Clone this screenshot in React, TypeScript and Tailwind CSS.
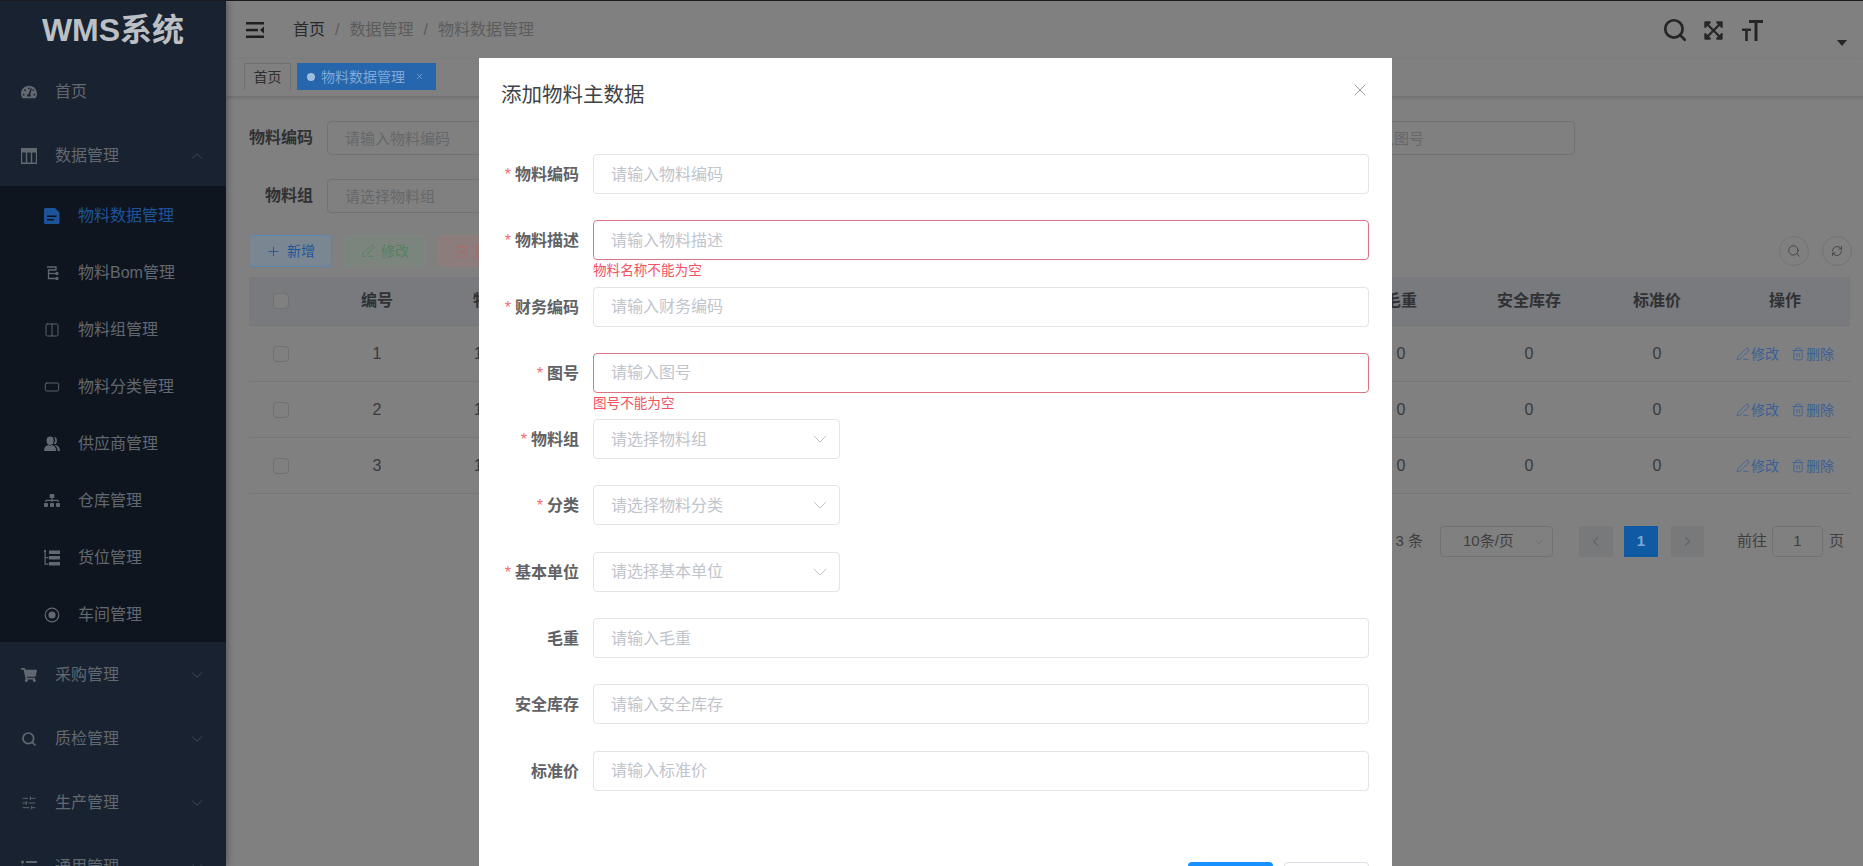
import { ChevronDown, ChevronLeft, ChevronRight, ChevronUp, Columns2, PenLine, Plus, RectangleHorizontal, RefreshCw, Search, SlidersHorizontal, Trash2, X } from "lucide-react";
import { FaExpandArrowsAlt, FaListUl, FaShoppingCart, FaSitemap, FaTachometerAlt } from "react-icons/fa";

function TableIcon() {
  return (
    <svg width="16" height="16" viewBox="0 0 16 16" fill="currentColor">
      <path d="M0 0h16v16H0zM1.200 4.500v10h3.600v-10zm5 0v10h3.600v-10zm5 0v10h3.600v-10z" fillRule="evenodd" />
    </svg>
  );
}

function DocIcon() {
  return (
    <svg width="16" height="16" viewBox="0 0 16 16" fill="currentColor">
      <path d="M1.500 0H11l4.500 4.500V14.500A1.500 1.500 0 0 1 14 16H1.500A1.500 1.500 0 0 1 0 14.500V1.500A1.500 1.500 0 0 1 1.500 0zM3 7.500v1.500h9.500V7.500zM3 11v1.500h7V11z" fillRule="evenodd" />
    </svg>
  );
}

function BomIcon() {
  return (
    <svg width="16" height="16" viewBox="0 0 16 16" fill="none" stroke="currentColor" strokeWidth="1.3">
      <path d="M3 2h9v3H4.500v8.500H12" />
      <path d="M4.500 8.500H12" />
      <circle cx="13" cy="8.500" r="1" />
      <circle cx="13" cy="13.500" r="1" />
    </svg>
  );
}

function PeopleIcon() {
  return (
    <svg width="17" height="16" viewBox="0 0 17 16" fill="currentColor">
      <ellipse cx="6.500" cy="4.500" rx="3.800" ry="4.500" />
      <path d="M0 15.500c0-4 2-6 4.500-6.500 1.200.8 2.800.8 4 0 2.500.5 4.500 2.500 4.500 6.500z" />
      <path d="M10.500.500c2 0 3.300 1.800 3.300 4 0 1.800-.8 3.300-2 3.800l-1.500-.8c1-1 1.600-2.200 1.600-3.400 0-1.300-.5-2.500-1.400-3.600zM12.500 9c2.500.5 4.500 2.500 4.500 6.500h-2.500c0-2.800-1-5-3-6z" />
    </svg>
  );
}

function RackIcon() {
  return (
    <svg width="16" height="16" viewBox="0 0 16 16" fill="currentColor">
      <rect x="0" y="0" width="2" height="2" />
      <rect x="0.500" y="2" width="1.200" height="13" />
      <rect x="1.500" y="7" width="3" height="1.200" />
      <rect x="1.500" y="13.500" width="3" height="1.200" />
      <rect x="5" y="0.500" width="11" height="3.500" />
      <rect x="5" y="6" width="11" height="3.500" />
      <rect x="5" y="12" width="11" height="3.500" />
    </svg>
  );
}

function RadioIcon() {
  return (
    <svg width="16" height="16" viewBox="0 0 16 16" fill="none" stroke="currentColor" strokeWidth="1.2">
      <circle cx="8" cy="8" r="6.800" />
      <circle cx="8" cy="8" r="3.600" fill="currentColor" stroke="none" />
    </svg>
  );
}

function ToggleIcon() {
  return (
    <svg width="18" height="16" viewBox="0 0 18 16" fill="#1f1f1f" className="shrink-0">
      <rect width="18" height="2.500" />
      <rect y="6.800" width="12" height="2.500" />
      <rect y="13.500" width="18" height="2.500" />
      <path d="M18 4.500v7L14 8z" />
    </svg>
  );
}

function TextSizeIcon() {
  return (
    <svg width="21" height="21" viewBox="0 0 21 21" fill="#262626">
      <path d="M7 0h14v3h-5.500v18h-3V3H7z" />
      <path d="M0 8.500h9v2.500H5.800v10H3.200V11H0z" />
    </svg>
  );
}

const subMenus = [
  { label: "物料数据管理", icon: <DocIcon />, active: true },
  { label: "物料Bom管理", icon: <BomIcon /> },
  { label: "物料组管理", icon: <Columns2 size={18} strokeWidth={1.4} /> },
  { label: "物料分类管理", icon: <RectangleHorizontal size={18} strokeWidth={1.4} /> },
  { label: "供应商管理", icon: <PeopleIcon /> },
  { label: "仓库管理", icon: <FaSitemap size={17} /> },
  { label: "货位管理", icon: <RackIcon /> },
  { label: "车间管理", icon: <RadioIcon /> },
];

const lowerMenus = [
  { label: "采购管理", icon: <FaShoppingCart size={16} /> },
  { label: "质检管理", icon: <Search size={20} strokeWidth={2.5} /> },
  { label: "生产管理", icon: <SlidersHorizontal size={18} strokeWidth={1.4} /> },
  { label: "通用管理", icon: <FaListUl size={16} /> },
];

const columns = ["编号", "物料编码", "物料描述", "财务编码", "图号", "物料组", "分类", "基本单位", "毛重", "安全库存", "标准价"];

const formRows = [
  { label: "物料编码", placeholder: "请输入物料编码", required: true },
  { label: "物料描述", placeholder: "请输入物料描述", required: true, error: "物料名称不能为空" },
  { label: "财务编码", placeholder: "请输入财务编码", required: true },
  { label: "图号", placeholder: "请输入图号", required: true, error: "图号不能为空" },
  { label: "物料组", placeholder: "请选择物料组", required: true, select: true },
  { label: "分类", placeholder: "请选择物料分类", required: true, select: true },
  { label: "基本单位", placeholder: "请选择基本单位", required: true, select: true },
  { label: "毛重", placeholder: "请输入毛重" },
  { label: "安全库存", placeholder: "请输入安全库存" },
  { label: "标准价", placeholder: "请输入标准价" },
];

function Sidebar() {
  return (
    <aside className="relative z-10 flex w-[226px] shrink-0 flex-col bg-[#192230] text-[#62686f] shadow-[2px_0_6px_rgba(0,0,0,0.3)]">
      <div className="flex h-[59px] shrink-0 items-center justify-center pb-[2px] text-[32px] font-bold text-[#bcc0c5]">WMS系统</div>
      <div className="flex h-16 shrink-0 items-center gap-[18px] pl-[21px] text-base">
        <FaTachometerAlt size={16} />
        <span>首页</span>
      </div>
      <div className="flex h-[62px] shrink-0 items-center gap-[18px] pl-[21px] pr-[20px] pt-[1px] text-base">
        <TableIcon />
        <span className="flex-1">数据管理</span>
        <ChevronUp size={18} strokeWidth={1} className="text-[#4f5660]" />
      </div>
      <div className="shrink-0 bg-[#0f151f]">
        {subMenus.map((m) => (
          <div key={m.label} className={`flex h-[57px] items-center gap-[18px] pl-[44px] pt-[2px] text-base ${m.active ? "text-[#1d5499]" : ""}`}>
            <span className="flex w-4 justify-center">{m.icon}</span>
            <span>{m.label}</span>
          </div>
        ))}
      </div>
      {lowerMenus.map((m) => (
        <div key={m.label} className="flex h-16 shrink-0 items-center gap-[18px] pl-[21px] pr-[20px] pt-[2px] text-base">
          <span className="flex w-4 justify-center">{m.icon}</span>
          <span className="flex-1">{m.label}</span>
          <ChevronDown size={18} strokeWidth={1} className="text-[#4f5660]" />
        </div>
      ))}
    </aside>
  );
}

function FilterField({ label, placeholder }: { label: string; placeholder: string }) {
  return (
    <div className="flex items-center">
      <label className="w-[64px] shrink-0 whitespace-nowrap text-right text-base font-bold text-[#303133]">{label}</label>
      <input
        readOnly
        placeholder={placeholder}
        className="ml-[14px] h-[34px] w-[244px] rounded border border-[#707276] bg-transparent px-[17px] text-[15px] outline-none placeholder:text-[#666769]"
      />
    </div>
  );
}

function Page() {
  return (
    <main className="flex min-w-0 flex-1 flex-col bg-[#808080]">
      <header className="flex h-[58px] shrink-0 items-center pl-[20px] pr-[16px] text-base">
        <ToggleIcon />
        <nav className="ml-[29px] flex items-center text-[#5c5c5c]">
          <span className="text-[#2a2a2a]">首页</span>
          <span className="mx-[10px]">/</span>
          <span>数据管理</span>
          <span className="mx-[10px]">/</span>
          <span>物料数据管理</span>
        </nav>
        <div className="ml-auto flex items-center gap-[15px] pr-[74px] text-[#262626]">
          <Search size={26} strokeWidth={2.5} />
          <FaExpandArrowsAlt size={21} />
          <span className="ml-[3px]"><TextSizeIcon /></span>
        </div>
        <span className="mt-[26px] h-0 w-0 border-x-[5px] border-t-[6px] border-x-transparent border-t-[#262626]" />
      </header>

      <div className="flex h-[38px] shrink-0 items-start gap-[6px] border-b border-[#747474] pl-[18px] pt-[4px] text-sm shadow-[0_1px_3px_rgba(0,0,0,0.15)]">
        <span className="flex h-[27px] w-[47px] items-center justify-center border border-b-0 border-[#6f7073] text-[#2e2e2e]">首页</span>
        <span className="flex h-[27px] w-[139px] items-center gap-[6px] bg-[#2566ad] pl-[10px] text-[#7fa9d8]">
          <span className="h-2 w-2 rounded-full bg-[#9fbfe2]" />
          物料数据管理
          <X size={9} className="ml-[4px]" />
        </span>
      </div>

      <section className="flex min-h-0 flex-1 flex-col pl-[23px] pr-[11px] pt-[24px]">
        <div className="flex gap-[12.670px]">
          <FilterField label="物料编码" placeholder="请输入物料编码" />
          <FilterField label="物料描述" placeholder="请输入物料描述" />
          <FilterField label="财务编码" placeholder="请输入财务编码" />
          <FilterField label="图号" placeholder="请输入图号" />
        </div>
        <div className="mt-[24px] flex">
          <FilterField label="物料组" placeholder="请选择物料组" />
        </div>

        <div className="mt-[22px] flex items-center gap-[12px] text-sm">
          <button className="flex h-[32px] w-[83px] items-center justify-center gap-[6px] rounded border border-[#5987b5] bg-[#7a8793] text-[#22569a]">
            <Plus size={15} strokeWidth={1.5} />
            新增
          </button>
          <button className="flex h-[32px] w-[82px] items-center justify-center gap-[6px] rounded border border-[#7d8780] bg-[#7b857e] text-[#55805f]">
            <PenLine size={14} strokeWidth={1.5} />
            修改
          </button>
          <button className="flex h-[32px] w-[82px] items-center justify-center gap-[6px] rounded border border-[#8e7e7e] bg-[#8c7c7c] text-[#ad6a6a]">
            <Trash2 size={14} strokeWidth={1.5} />
            删除
          </button>
          <div className="ml-auto flex gap-[13px] text-[#3f3f3f]">
            <span className="flex h-[30px] w-[30px] items-center justify-center rounded-full border border-[#747474]">
              <Search size={14} strokeWidth={1.5} />
            </span>
            <span className="flex h-[30px] w-[30px] items-center justify-center rounded-full border border-[#747474]">
              <RefreshCw size={12} strokeWidth={1.7} />
            </span>
          </div>
        </div>

        <div className="mr-[2px] mt-[10px] text-base">
          <div className="grid h-[49px] grid-cols-[64px_repeat(12,128px)] items-center border-b border-[#747577] bg-[#787a7e] text-center font-bold text-[#303133]">
            <span className="mx-auto h-4 w-4 rounded-sm border border-[#6e7073] bg-[#808080]" />
            {columns.map((c) => (
              <span key={c}>{c}</span>
            ))}
            <span>操作</span>
          </div>
          {[1, 2, 3].map((n) => (
            <div key={n} className="grid h-[56px] grid-cols-[64px_repeat(12,128px)] items-center border-b border-[#757678] text-center text-[#3a3a3c]">
              <span className="mx-auto h-4 w-4 rounded-sm border border-[#6e7073]" />
              <span>{n}</span>
              <span>{1000000 + n}</span>
              <span>物料{n}</span>
              <span>{n}</span>
              <span>{n}</span>
              <span>{n}</span>
              <span>{n}</span>
              <span>个</span>
              <span>0</span>
              <span>0</span>
              <span>0</span>
              <span className="flex items-center justify-center gap-[12px] text-sm text-[#3b5f96]">
                <span className="flex items-center gap-[1px]">
                  <PenLine size={14} strokeWidth={1.4} />
                  修改
                </span>
                <span className="flex items-center gap-[1px]">
                  <Trash2 size={14} strokeWidth={1.4} />
                  删除
                </span>
              </span>
            </div>
          ))}
        </div>

        <div className="mt-[32px] flex items-center justify-end pr-[8px] text-[15px] text-[#3f3f41]">
          <span>共 3 条</span>
          <span className="ml-[17px] flex h-[31px] w-[113px] items-center rounded border border-[#717275] pl-[22px] pr-[6px]">
            <span className="flex-1">10条/页</span>
            <ChevronDown size={14} strokeWidth={1.4} className="text-[#6d6d6f]" />
          </span>
          <span className="ml-[26px] flex h-[31px] w-[34px] items-center justify-center bg-[#78797b] text-[#666]">
            <ChevronLeft size={15} strokeWidth={2} />
          </span>
          <span className="ml-[11px] flex h-[31px] w-[34px] items-center justify-center bg-[#0f5aa3] font-bold text-[#7ba9d6]">1</span>
          <span className="ml-[13px] flex h-[31px] w-[33px] items-center justify-center bg-[#78797b] text-[#666]">
            <ChevronRight size={15} strokeWidth={2} />
          </span>
          <span className="ml-[33px]">前往</span>
          <span className="ml-[5px] flex h-[31px] w-[51px] items-center justify-center rounded border border-[#717275]">1</span>
          <span className="ml-[6px]">页</span>
        </div>
      </section>
    </main>
  );
}

function MaterialDialog() {
  return (
    <div className="absolute left-[479px] top-[57px] w-[913px] bg-white">
      <div className="relative h-[96px] pl-[22px] pt-[23px]">
        <h2 className="text-[20.500px] leading-7 text-[#404246]">添加物料主数据</h2>
        <X size={20} strokeWidth={1.1} className="absolute right-[22px] top-[22px] text-[#909399]" />
      </div>
      <form>
        {formRows.map((r) => (
          <div key={r.label} className="flex h-[66.300px] items-start">
            <label className="w-[100px] shrink-0 pt-[1px] text-right text-base font-bold leading-10 text-[#606266]">
              {r.required && <span className="mr-1 font-normal text-[#f56c6c]">*</span>}
              {r.label}
            </label>
            <div className={`relative ml-[14px] ${r.select ? "w-[247px]" : "w-[776px]"}`}>
              <input
                readOnly
                placeholder={r.placeholder}
                className={`h-10 w-full rounded border bg-white pl-[17px] pt-[1px] text-base outline-none placeholder:text-[#c0c4cc] ${r.error ? "border-[#dd7484]" : "border-[#e2e4e9]"}`}
              />
              {r.select && <ChevronDown size={24} strokeWidth={1} className="absolute right-[8px] top-[8px] text-[#c0c4cc]" />}
              {r.error && <p className="absolute left-0 top-[42px] text-[13.600px] leading-[18px] text-[#f0525f]">{r.error}</p>}
            </div>
          </div>
        ))}
      </form>
      <div className="flex justify-end gap-[11px] pb-5 pr-[23px] pt-[45px] text-sm">
        <button className="h-10 w-[85px] rounded bg-[#1890ff] text-white">确定</button>
        <button className="h-10 w-[85px] rounded border border-[#dcdfe6] text-[#606266]">取消</button>
      </div>
    </div>
  );
}

export default function App() {
  return (
    <div className="relative flex h-screen w-full overflow-hidden border-t border-[#1c1c1c] font-['Liberation_Sans','Noto_Sans_CJK_SC',sans-serif]">
      <Sidebar />
      <Page />
      <MaterialDialog />
    </div>
  );
}
